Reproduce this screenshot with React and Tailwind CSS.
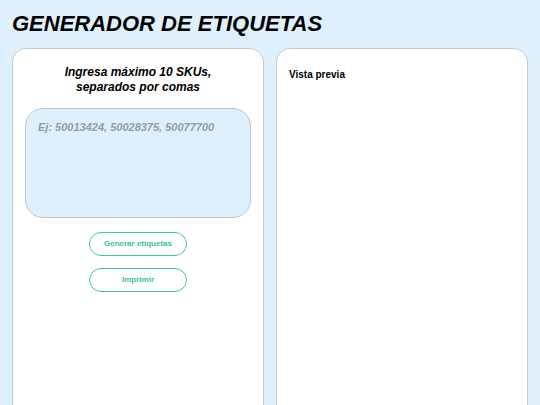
export default function App() {
  return (
    <div
      className="min-h-[405px] h-[405px] overflow-hidden bg-[#dff0fd] px-3"
      style={{ fontFamily: '"Liberation Sans", Arial, sans-serif' }}
    >
      <h1 className="pt-[10px] text-[22px] leading-[28px] font-bold italic text-black">
        GENERADOR DE ETIQUETAS
      </h1>
      <div className="mt-[10px] grid grid-cols-2 gap-3">
        <div className="h-[400px] rounded-[14px] border border-[#c2ccd6] bg-white px-3 pt-[16px]">
          <p className="text-center text-[12px] leading-[15px] font-bold italic text-black">
            Ingresa máximo 10 SKUs,
            <br />
            separados por comas
          </p>
          <textarea
            className="mt-[13px] block h-[110px] w-full resize-none rounded-[18px] border border-[#b7c7d4] bg-[#dff0fd] px-3 py-[10px] text-[11px] font-bold italic outline-none placeholder:text-[#8f9daa]"
            placeholder="Ej: 50013424, 50028375, 50077700"
          />
          <div className="mt-[14px] flex flex-col items-center gap-3">
            <button className="h-[24px] w-[98px] rounded-full border border-[#3cc9a0] bg-white text-[8px] font-bold text-[#34c39b]">
              Generar etiquetas
            </button>
            <button className="h-[24px] w-[98px] rounded-full border border-[#3cc9a0] bg-white text-[8px] font-bold text-[#34c39b]">
              Imprimir
            </button>
          </div>
        </div>
        <div className="h-[400px] rounded-[14px] border border-[#c2ccd6] bg-white px-3 pt-[19px]">
          <p className="text-[10px] leading-[14px] font-bold text-black">Vista previa</p>
        </div>
      </div>
    </div>
  );
}
